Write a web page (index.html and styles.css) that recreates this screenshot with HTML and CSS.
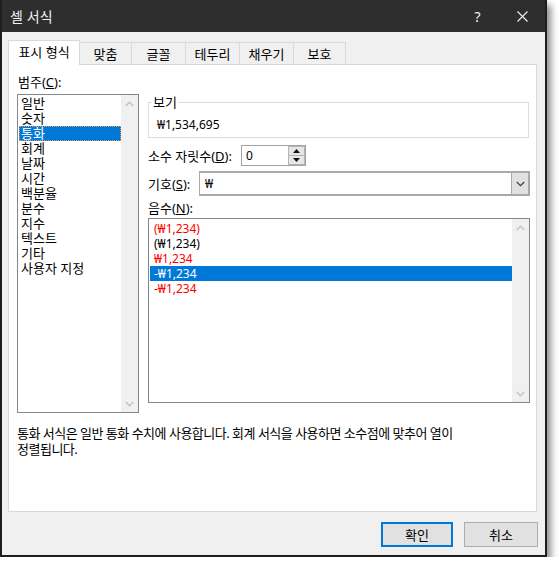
FILE: index.html
```html
<!DOCTYPE html>
<html lang="ko">
<head>
<meta charset="utf-8">
<title>셀 서식</title>
<link rel="stylesheet" href="styles.css">
</head>
<body>
<div class="window">
  <div class="titlebar">
    <span class="title">셀 서식</span>
    <div class="tb-btns">
      <span class="tb-btn tb-help">?</span>
      <span class="tb-btn tb-close"><svg width="11" height="11" viewBox="0 0 11 11"><path d="M0.5 0.5L10.5 10.5M10.5 0.5L0.5 10.5" stroke="#f2f2f2" stroke-width="1.1" fill="none"/></svg></span>
    </div>
  </div>
  <div class="body">
    <div class="tabs">
      <div class="tab active t72">표시 형식</div>
      <div class="tab t53">맞춤</div>
      <div class="tab t55">글꼴</div>
      <div class="tab t55">테두리</div>
      <div class="tab t55">채우기</div>
      <div class="tab t53">보호</div>
    </div>
    <div class="panel">
      <div class="label">범주(<u>C</u>):</div>
      <div class="main">
        <div class="listbox cat">
          <ul class="items">
            <li>일반</li>
            <li>숫자</li>
            <li class="sel">통화</li>
            <li>회계</li>
            <li>날짜</li>
            <li>시간</li>
            <li>백분율</li>
            <li>분수</li>
            <li>지수</li>
            <li>텍스트</li>
            <li>기타</li>
            <li>사용자 지정</li>
          </ul>
          <div class="vscroll">
            <div class="arrow"><svg width="9" height="6" viewBox="0 0 9 6"><path d="M0.8 5L4.5 1.3L8.2 5" stroke="#c4c4c4" stroke-width="1.6" fill="none"/></svg></div>
            <div class="arrow"><svg width="9" height="6" viewBox="0 0 9 6"><path d="M0.8 1L4.5 4.7L8.2 1" stroke="#c4c4c4" stroke-width="1.6" fill="none"/></svg></div>
          </div>
        </div>
        <div class="right">
          <fieldset class="preview">
            <legend>보기</legend>
            <div class="sample">₩1,534,695</div>
          </fieldset>
          <div class="row decimals">
            <span class="rlabel w93">소수 자릿수(<u>D</u>):</span>
            <div class="spin">
              <span class="spin-val">0</span>
              <div class="spin-btns">
                <div class="sb"><svg width="7" height="4" viewBox="0 0 7 4"><path d="M0 4L3.5 0L7 4Z" fill="#111"/></svg></div>
                <div class="sb"><svg width="7" height="4" viewBox="0 0 7 4"><path d="M0 0L7 0L3.5 4Z" fill="#111"/></svg></div>
              </div>
            </div>
          </div>
          <div class="row symbol">
            <span class="rlabel w51">기호(<u>S</u>):</span>
            <div class="combo">
              <span class="combo-val">₩</span>
              <div class="combo-btn"><svg width="9" height="6" viewBox="0 0 9 6"><path d="M0.8 1L4.5 4.7L8.2 1" stroke="#444" stroke-width="1.3" fill="none"/></svg></div>
            </div>
          </div>
          <div class="label neg-label">음수(<u>N</u>):</div>
          <div class="listbox neg">
            <ul class="items">
              <li class="red">(₩1,234)</li>
              <li>(₩1,234)</li>
              <li class="red">₩1,234</li>
              <li class="sel nofocus">-₩1,234</li>
              <li class="red">-₩1,234</li>
            </ul>
            <div class="vscroll">
              <div class="arrow"><svg width="9" height="6" viewBox="0 0 9 6"><path d="M0.8 5L4.5 1.3L8.2 5" stroke="#c4c4c4" stroke-width="1.6" fill="none"/></svg></div>
              <div class="arrow"><svg width="9" height="6" viewBox="0 0 9 6"><path d="M0.8 1L4.5 4.7L8.2 1" stroke="#c4c4c4" stroke-width="1.6" fill="none"/></svg></div>
            </div>
          </div>
        </div>
      </div>
      <p class="desc">통화 서식은 일반 통화 수치에 사용합니다. 회계 서식을 사용하면 소수점에 맞추어 열이<br>정렬됩니다.</p>
    </div>
    <div class="buttons">
      <button class="btn primary">확인</button>
      <button class="btn cancel">취소</button>
    </div>
  </div>
</div>
</body>
</html>
```

FILE: styles.css
```css
* { box-sizing: border-box; }
html, body { margin: 0; padding: 0; background: #fff; }
body {
  font-family: "Noto Sans", "Noto Sans CJK KR", sans-serif;
  font-size: 13px;
  color: #000;
}
u { text-decoration: underline; text-underline-offset: 1px; }

.window {
  width: 547px;
  height: 557px;
  border: 2px solid #1e1e1e;
  border-top: none;
  background: #f0f0f0;
  box-shadow: 4px 5px 7px rgba(0, 0, 0, 0.45);
  display: flex;
  flex-direction: column;
}

.titlebar {
  height: 32px;
  background: #2e2e2e;
  display: flex;
  align-items: center;
  padding-left: 8px;
  color: #f2f2f2;
}
.title { font-family: "Noto Sans CJK KR", sans-serif; font-size: 14px; }
.tb-btns { margin-left: auto; display: flex; height: 32px; }
.tb-btn { width: 45px; display: flex; align-items: center; justify-content: center; }
.tb-help { font-size: 14px; font-family: "Noto Sans", sans-serif; }

.body {
  flex: 1;
  display: flex;
  flex-direction: column;
  padding: 8px 8px 0 6px;
}

.tabs { height: 24px; display: flex; align-items: flex-end; }
.tab {
  height: 22px;
  border: 1px solid #d9d9d9;
  border-bottom: none;
  background: #f0f0f0;
  margin-left: -1px;
  display: flex;
  align-items: center;
  justify-content: center;
  line-height: 16px;
}
.tab.active {
  height: 25px;
  margin-left: 0;
  margin-bottom: -1px;
  background: #fff;
  position: relative;
  z-index: 1;
  padding-bottom: 2px;
}
.t72 { width: 72px; }
.t53 { width: 53px; }
.t55 { width: 55px; }

.panel {
  width: 529px;
  height: 448px;
  background: #fff;
  border: 1px solid #d9d9d9;
  padding: 9px 6px 0 8px;
}
.label { height: 16px; line-height: 16px; padding-left: 1px; margin-bottom: 4px; }

.main { display: flex; gap: 9px; }

.listbox {
  border: 1px solid #828790;
  background: #fff;
  display: flex;
}
.listbox.cat { width: 122px; height: 319px; }
.items { flex: 1; list-style: none; margin: 0; padding: 1px 0 0 0; }
.items li {
  height: 15px;
  line-height: 15px;
  margin-left: 1px;
  padding-left: 2px;
  white-space: nowrap;
}
.items li.sel {
  background: #0078d7;
  color: #fff;
  outline: 1px dotted #e89a50;
  outline-offset: -1px;
}
.items li.sel.nofocus { outline: none; }
.items li.red { color: #ff0000; }

.vscroll {
  width: 17px;
  background: #f0f0f0;
  display: flex;
  flex-direction: column;
  justify-content: space-between;
}
.arrow { height: 17px; display: flex; align-items: center; justify-content: center; }

.right { width: 382px; display: flex; flex-direction: column; }

.preview {
  margin: 0 1px 0 0;
  padding: 0 4px 4px 8px;
  border: 1px solid #dcdcdc;
  min-width: 0;
}
.preview legend {
  padding: 0 1px;
  margin-left: -5px;
  line-height: 16px;
  height: 16px;
}
.sample { line-height: 16px; margin-top: 7px; font-size: 12px; }

.row { display: flex; align-items: center; }
.decimals { margin-top: 7px; height: 21px; }
.symbol { margin-top: 5px; height: 25px; }
.rlabel { line-height: 16px; white-space: nowrap; }
.w93 { width: 93px; }
.w51 { width: 51px; }

.spin {
  width: 65px;
  height: 21px;
  border: 1px solid #a3a3a3;
  display: flex;
  background: #fff;
}
.spin-val { flex: 1; line-height: 19px; padding-left: 4px; font-size: 12px; }
.spin-btns { width: 17px; display: flex; flex-direction: column; }
.sb {
  flex: 1;
  background: #e6e6e6;
  border: 1px solid #b4b4b4;
  display: flex;
  align-items: center;
  justify-content: center;
}
.sb + .sb { border-top: none; }

.combo {
  flex: 1;
  height: 25px;
  border: 1px solid #a9a9a9;
  border-width: 2px 2px 2px 1px;
  display: flex;
  background: #fff;
}
.combo-val { flex: 1; line-height: 21px; padding-left: 5px; font-size: 12px; }
.combo-btn {
  width: 17px;
  background: #e1e1e1;
  border-left: 1px solid #a9a9a9;
  display: flex;
  align-items: center;
  justify-content: center;
}

.neg-label { margin-top: 4px; margin-bottom: 2px; padding-left: 0; }
.listbox.neg { height: 185px; }
.listbox.neg .items { padding-top: 2px; font-size: 12px; }
.listbox.neg .items li { padding-left: 4px; }

.desc { margin: 12px 0 0 0; line-height: 16px; white-space: nowrap; letter-spacing: -0.5px; }

.buttons {
  display: flex;
  justify-content: flex-end;
  gap: 11px;
  padding-top: 10px;
  margin-right: -1px;
}
.btn {
  height: 25px;
  background: #e1e1e1;
  border: 1px solid #adadad;
  font-family: "Noto Sans CJK KR", sans-serif;
  font-size: 13px;
  color: #000;
  padding: 0;
}
.btn.primary { width: 72px; border: 2px solid #0078d7; }
.btn.cancel { width: 74px; }
```
